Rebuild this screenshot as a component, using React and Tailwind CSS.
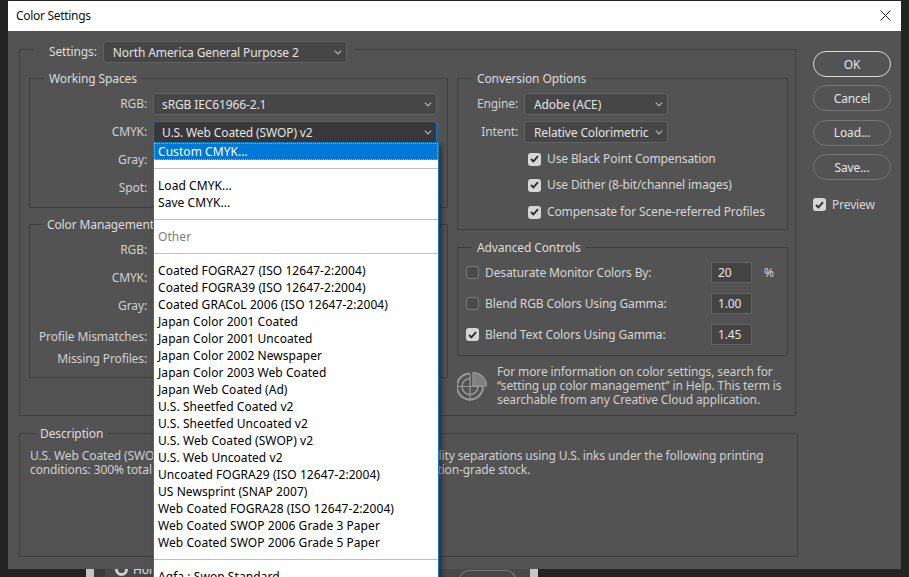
const profiles = [
  "Coated FOGRA27 (ISO 12647-2:2004)",
  "Coated FOGRA39 (ISO 12647-2:2004)",
  "Coated GRACoL 2006 (ISO 12647-2:2004)",
  "Japan Color 2001 Coated",
  "Japan Color 2001 Uncoated",
  "Japan Color 2002 Newspaper",
  "Japan Color 2003 Web Coated",
  "Japan Web Coated (Ad)",
  "U.S. Sheetfed Coated v2",
  "U.S. Sheetfed Uncoated v2",
  "U.S. Web Coated (SWOP) v2",
  "U.S. Web Uncoated v2",
  "Uncoated FOGRA29 (ISO 12647-2:2004)",
  "US Newsprint (SNAP 2007)",
  "Web Coated FOGRA28 (ISO 12647-2:2004)",
  "Web Coated SWOP 2006 Grade 3 Paper",
  "Web Coated SWOP 2006 Grade 5 Paper",
];

const Chevron = () => (
  <svg width="8" height="5" viewBox="0 0 8 5" className="mt-px shrink-0" fill="none" stroke="#b4b4b4" strokeWidth="1.2">
    <path d="M0.8 0.6 L4 3.8 L7.2 0.6" />
  </svg>
);

const Select = ({ value, className, active, textClass = "" }) => (
  <div
    className={`flex h-[22px] items-center justify-between rounded-[3px] border pl-[9px] pr-[4px] text-[#e2e2e2] ${
      active ? "border-[#1473d0] bg-[#383838]" : "border-[#626262] bg-[#464646]"
    } ${className}`}
  >
    <span className={`whitespace-nowrap pt-px ${textClass}`}>{value}</span>
    <Chevron />
  </div>
);

const Checkbox = ({ checked }) =>
  checked ? (
    <span className="flex h-[13px] w-[13px] shrink-0 items-center justify-center rounded-[3px] bg-[#d6d6d6]">
      <svg width="9" height="8" viewBox="0 0 9 8" fill="none" stroke="#2b2b2b" strokeWidth="1.8">
        <path d="M1 4 L3.4 6.4 L8 1.2" />
      </svg>
    </span>
  ) : (
    <span className="h-[13px] w-[13px] shrink-0 rounded-[3px] border border-[#7c7c7c] bg-[#4b4b4b]" />
  );

const Group = ({ title, className, children, legendClass = "ml-[14px]" }) => (
  <fieldset className={`border border-[#3f3f3f] ${className}`}>
    <legend className={`h-[17px] px-[5px] leading-[17px] text-[#dcdcdc] ${legendClass}`}>{title}</legend>
    {children}
  </fieldset>
);

const Row = ({ label, value, active, className = "" }) => (
  <div className={`flex items-center ${className}`}>
    <label className="w-[117px] shrink-0 whitespace-nowrap text-right text-[#cfcfcf]">{label}</label>
    <Select value={value} active={active} textClass="-ml-px" className="ml-[6px] w-[284px]" />
  </div>
);

const CheckRow = ({ label, className = "" }) => (
  <div className={`ml-[70px] flex h-[18px] items-center gap-[6px] text-[#d6d6d6] ${className}`}>
    <Checkbox checked />
    <span className="whitespace-nowrap">{label}</span>
  </div>
);

const GammaRow = ({ label, value, checked, unit }) => (
  <div className="flex h-[21px] items-center pl-[8px] text-[#d6d6d6]">
    <Checkbox checked={checked} />
    <span className="ml-[6px] w-[226px] whitespace-nowrap">{label}</span>
    <span className="flex h-[21px] w-[41px] items-center border border-[#626262] bg-[#444444] pl-[6px] text-[#e6e6e6]">
      {value}
    </span>
    {unit && <span className="ml-[12px]">{unit}</span>}
  </div>
);

const PillButton = ({ children, primary }) => (
  <button
    className={`h-[26px] w-[78px] rounded-full border pt-px text-center text-[#e4e4e4] ${
      primary ? "border-[#d8d8d8] border-[1.5px]" : "border-[#757575]"
    }`}
  >
    {children}
  </button>
);

const ColorIcon = () => (
  <svg width="30" height="30" viewBox="0 0 30 30" fill="none" stroke="#9a9a9a" className="mt-[7px] shrink-0">
    <path strokeWidth="2" d="M13 1.5 A13 13 0 1 0 26 14.5" />
    <path strokeWidth="1.5" d="M13 6.5 A8 8 0 1 0 21 14.5" />
    <path strokeWidth="1.2" d="M0 14.5 H26 M13 2 V29" />
    <path fill="#7f7f7f" strokeWidth="1.2" d="M16 0.6 A13.4 13.4 0 0 1 29.4 14 H16 Z" />
  </svg>
);

const MenuItem = ({ children, className = "" }) => (
  <div className={`h-[17px] whitespace-nowrap pl-[4px] leading-[17px] ${className}`}>{children}</div>
);

const MenuLine = () => (
  <div className="flex h-[17px] items-center">
    <div className="h-px w-full bg-[#c0c0c0]" />
  </div>
);

const ProfileMenu = () => (
  <div className="absolute left-[153px] top-[142px] h-[450px] w-[286px] border border-[#0b78d6] bg-white tracking-[0.06px] text-black shadow-[3px_3px_5px_rgba(0,0,0,0.45)]">
    <div className="h-[17px] border border-dotted border-[#e9a25a] bg-[#0078d7] pl-[3px] leading-[15px] text-white">
      Custom CMYK...
    </div>
    <MenuLine />
    <MenuItem>Load CMYK...</MenuItem>
    <MenuItem>Save CMYK...</MenuItem>
    <MenuLine />
    <MenuItem className="text-[#7d7d7d]">Other</MenuItem>
    <MenuLine />
    {profiles.map((p) => (
      <MenuItem key={p}>{p}</MenuItem>
    ))}
    <MenuLine />
    <MenuItem>Agfa : Swop Standard</MenuItem>
  </div>
);

const App = () => {
  return (
    <div className="relative flex h-[577px] w-[909px] flex-col justify-end overflow-hidden bg-[#232323] font-['Noto_Sans',sans-serif] text-[12px] tracking-[-0.12px]">
      {/* window behind the dialog, only its bottom edge shows */}
      <div className="ml-[86px] flex h-[8px] w-[452px]">
        <div className="w-[8px] bg-[#c4c4c4]" />
        <div className="w-[11px] bg-[#3a3a3a]" />
        <div className="flex flex-1 items-center gap-[5px] bg-[#484848] pl-[10px] text-[#d8e2ee]">
          <span className="-mt-[8px] h-[13px] w-[13px] rounded-full border-[3px] border-[#d0d0d0]" />
          <span className="-mt-[6px] leading-none">Hom</span>
          <span className="ml-[294px] mt-[4px] h-[10px] w-[57px] rounded-t-full border border-[#7a7a7a]" />
        </div>
        <div className="w-[8px] bg-[#c8c8c8]" />
      </div>

      <div className="absolute left-[8px] top-px flex h-[568px] w-[893px] flex-col bg-[#535353]">
        <div className="flex h-[30px] items-center justify-between bg-white pl-[8px] pr-[10px] text-[#111]">
          <span className="tracking-[-0.3px]">Color Settings</span>
          <svg width="11" height="11" viewBox="0 0 11 11" stroke="#222" strokeWidth="1" className="-mt-[2px]">
            <path d="M0.5 0.5 L10.5 10.5 M10.5 0.5 L0.5 10.5" />
          </svg>
        </div>

        <div className="flex pl-[11px] pt-[10px]">
          <div className="w-[779px]">
            <fieldset className="h-[375px] w-[777px] border border-[#3f3f3f]">
              <legend className="ml-[13px] h-[17px] px-[7px] pl-[16px] text-[#dcdcdc]">
                <div className="flex items-center gap-[6px]">
                  <span>Settings:</span>
                  <Select value="North America General Purpose 2" className="w-[244px]" />
                </div>
              </legend>
              <div className="flex gap-[9px] pl-[9px] pt-[12px]">
                <div className="w-[419px]">
                  <Group title="Working Spaces" className="h-[138px]">
                    <div className="flex flex-col gap-[6px] pt-[6px]">
                      <Row label="RGB:" value="sRGB IEC61966-2.1" />
                      <Row label="CMYK:" value="U.S. Web Coated (SWOP) v2" active />
                      <Row label="Gray:" value="" />
                      <Row label="Spot:" value="" />
                    </div>
                  </Group>
                  <Group title="Color Management Policies" className="mt-[8px] h-[162px]" legendClass="ml-[12px]">
                    <div className="pt-[6px]">
                      <Row label="RGB:" value="" />
                      <Row label="CMYK:" value="" className="mt-[6px]" />
                      <Row label="Gray:" value="" className="mt-[6px]" />
                      <Row label="Profile Mismatches:" value="" className="mt-[9px]" />
                      <Row label="Missing Profiles:" value="" />
                    </div>
                  </Group>
                </div>

                <div className="w-[331px]">
                  <Group title="Conversion Options" className="h-[160px]">
                    <div className="pt-[6px]">
                      <div className="flex items-center">
                        <label className="w-[60px] text-right text-[#cfcfcf]">Engine:</label>
                        <Select value="Adobe (ACE)" className="ml-[6px] w-[144px]" />
                      </div>
                      <div className="mt-[6px] flex items-center">
                        <label className="w-[60px] text-right text-[#cfcfcf]">Intent:</label>
                        <Select value="Relative Colorimetric" className="ml-[6px] w-[144px]" />
                      </div>
                      <CheckRow label="Use Black Point Compensation" className="mt-[7px]" />
                      <CheckRow label="Use Dither (8-bit/channel images)" className="mt-[8px]" />
                      <CheckRow label="Compensate for Scene-referred Profiles" className="mt-[9px]" />
                    </div>
                  </Group>
                  <Group title="Advanced Controls" className="mt-[9px] h-[117px]">
                    <div className="flex flex-col gap-[10px] pt-[6px]">
                      <GammaRow label="Desaturate Monitor Colors By:" value="20" unit="%" />
                      <GammaRow label="Blend RGB Colors Using Gamma:" value="1.00" />
                      <GammaRow label="Blend Text Colors Using Gamma:" value="1.45" checked />
                    </div>
                  </Group>
                  <div className="mt-[9px] flex gap-[10px] leading-[14px] text-[#cfcfcf]">
                    <ColorIcon />
                    <p className="whitespace-nowrap">
                      For more information on color settings, search for
                      <br />
                      “setting up color management” in Help. This term is
                      <br />
                      searchable from any Creative Cloud application.
                    </p>
                  </div>
                </div>
              </div>
            </fieldset>

            <Group title="Description" className="mt-[9px] h-[132px] w-[779px]" legendClass="ml-[15px]">
              <p className="whitespace-nowrap pl-[10px] pt-[7px] leading-[14px] text-[#cfcfcf]">
                U.S. Web Coated (SWOP) v2: Provides high-
                <span className="ml-[152px]">quality separations using U.S. inks under the following printing</span>
                <br />
                conditions: 300% total area of ink coverage, negative plate, coated publication-grade stock.
              </p>
            </Group>
          </div>

          <div className="ml-[15px] flex flex-col gap-[8.4px] pt-[10px]">
            <PillButton primary>OK</PillButton>
            <PillButton>Cancel</PillButton>
            <PillButton>Load...</PillButton>
            <PillButton>Save...</PillButton>
            <div className="mt-[7px] flex h-[18px] items-center gap-[6px] text-[#d6d6d6]">
              <Checkbox checked />
              <span>Preview</span>
            </div>
          </div>
        </div>
      </div>

      <ProfileMenu />
    </div>
  );
};

export default App;
